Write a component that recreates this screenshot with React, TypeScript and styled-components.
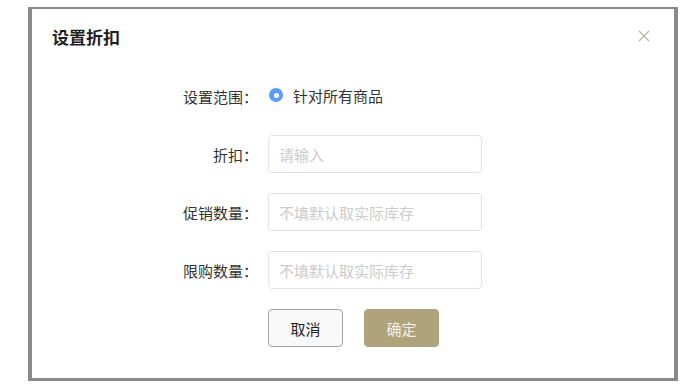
import React from 'react';
import styled, { createGlobalStyle } from 'styled-components';

const GlobalStyle = createGlobalStyle`
  html, body {
    margin: 0;
    padding: 0;
    background: #fff;
  }
  body {
    font-family: "Noto Sans CJK SC", "Noto Sans", sans-serif;
    color: #333;
  }
`;

const Page = styled.div`
  width: 699px;
  height: 389px;
  padding: 7px 0 0 28px;
  box-sizing: border-box;
`;

// the dimmed backdrop only shows as a thin band round the dialog
const Backdrop = styled.div`
  width: 650px;
  box-sizing: border-box;
  border-style: solid;
  border-color: #8a8a8a;
  border-width: 2px 4px 3px 4px;
`;

const Dialog = styled.div`
  background: #fff;
  height: 369px;
  box-sizing: border-box;
`;

const Header = styled.div`
  display: flex;
  align-items: center;
  justify-content: space-between;
  padding: 18px 24px 0 20px;
  height: 38px;
  box-sizing: border-box;
`;

const Title = styled.h3`
  margin: 0;
  font-size: 17px;
  line-height: 20px;
  font-weight: 700;
  color: #1f1f1f;
`;

const Close = styled.button`
  border: 0;
  background: none;
  padding: 0;
  width: 12px;
  height: 12px;
  display: flex;
  cursor: pointer;
  margin-top: -2px;
`;

const Form = styled.div`
  margin-top: 30px;
  padding-left: 106px;
  display: grid;
  grid-template-columns: 120px 214px;
  grid-auto-rows: 38px;
  column-gap: 10px;
  row-gap: 20px;
  align-items: center;
`;

const Label = styled.label`
  text-align: right;
  font-size: 15px;
  color: #333;
  white-space: nowrap;
`;

const Radio = styled.span`
  display: flex;
  align-items: center;
  gap: 10px;
  font-size: 15px;
  color: #333;
  white-space: nowrap;
  margin-top: -2px;
`;

const RadioDot = styled.span`
  width: 14px;
  height: 14px;
  border-radius: 50%;
  background: #5a9cf9;
  display: flex;
  align-items: center;
  justify-content: center;
  margin-left: 1px;

  &::after {
    content: '';
    width: 5px;
    height: 5px;
    border-radius: 50%;
    background: #fff;
  }
`;

const Input = styled.input`
  width: 214px;
  height: 38px;
  box-sizing: border-box;
  border: 1px solid #e2e2e2;
  border-radius: 4px;
  padding: 0 10px;
  font-family: inherit;
  font-size: 15px;
  color: #333;
  outline: none;

  &::placeholder {
    color: #cbcbcb;
  }
`;

const Actions = styled.div`
  grid-column: 2;
  display: flex;
  gap: 21px;
  margin-top: 0;
`;

const Button = styled.button<{ $primary?: boolean }>`
  width: 75px;
  height: 38px;
  border-radius: 4px;
  font-family: inherit;
  font-size: 15px;
  cursor: pointer;
  border: 1px solid ${(p) => (p.$primary ? '#b0a37c' : '#a3a3a3')};
  background: ${(p) => (p.$primary ? '#b0a37c' : '#f9f9f9')};
  color: ${(p) => (p.$primary ? '#f4f1ea' : '#1f1f1f')};
`;

export default function App() {
  return (
    <>
      <GlobalStyle />
      <Page>
        <Backdrop>
          <Dialog>
            <Header>
              <Title>设置折扣</Title>
              <Close aria-label="close">
                <svg width="12" height="12" viewBox="0 0 12 12">
                  <path d="M1 1L11 11M11 1L1 11" stroke="#bcb3a3" strokeWidth="1.2" fill="none" />
                </svg>
              </Close>
            </Header>
            <Form>
              <Label>设置范围：</Label>
              <Radio>
                <RadioDot />
                针对所有商品
              </Radio>

              <Label>折扣：</Label>
              <Input placeholder="请输入" />

              <Label>促销数量：</Label>
              <Input placeholder="不填默认取实际库存" />

              <Label>限购数量：</Label>
              <Input placeholder="不填默认取实际库存" />

              <Actions>
                <Button>取消</Button>
                <Button $primary>确定</Button>
              </Actions>
            </Form>
          </Dialog>
        </Backdrop>
      </Page>
    </>
  );
}
